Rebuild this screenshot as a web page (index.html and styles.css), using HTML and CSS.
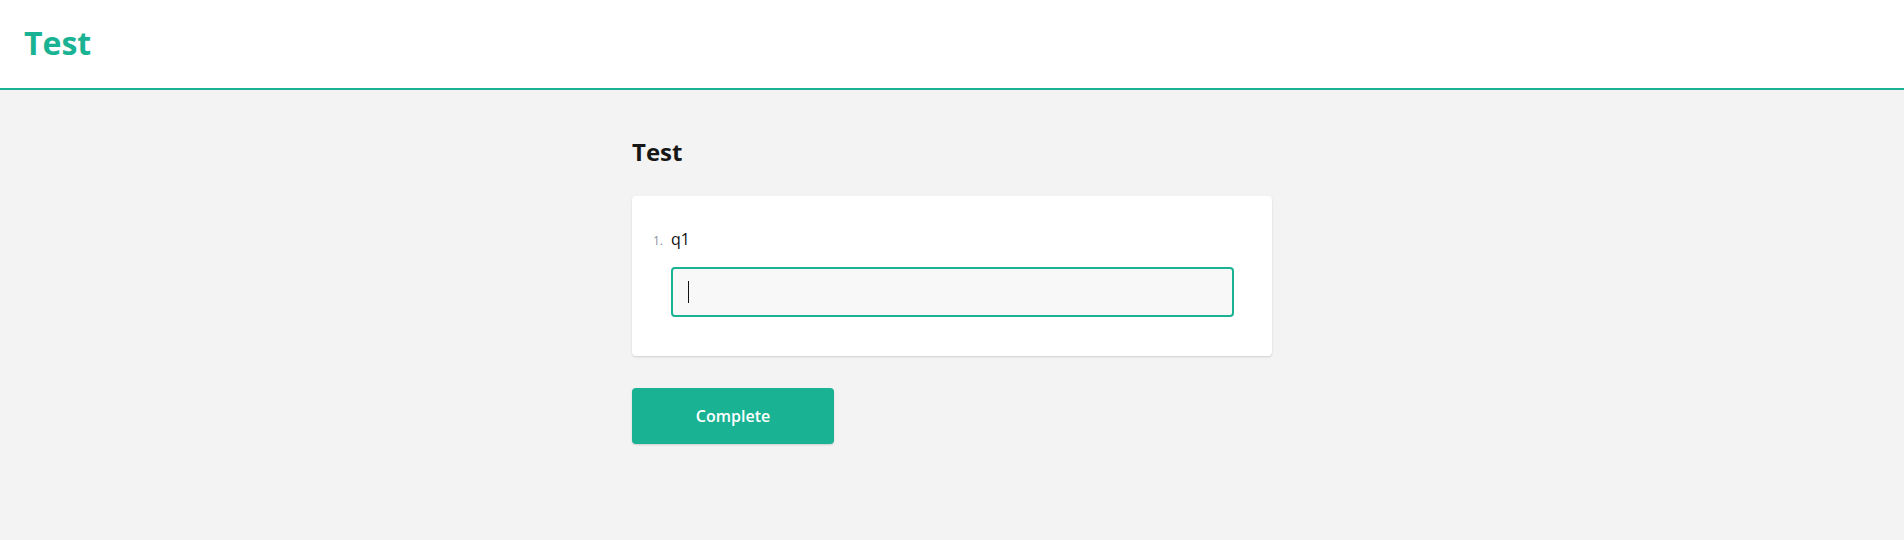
FILE: index.html
```html
<!DOCTYPE html>
<html lang="en">
<head>
<meta charset="utf-8">
<title>Test</title>
<link rel="stylesheet" href="styles.css">
</head>
<body>
<header class="topbar">
  <h1 class="brand">Test</h1>
</header>
<main class="survey">
  <h2 class="page-title">Test</h2>
  <section class="card">
    <div class="q-title">
      <span class="q-num">1.</span>
      <span class="q-text">q1</span>
    </div>
    <div class="q-input">
      <span class="caret"></span>
    </div>
  </section>
  <div class="nav">
    <button class="btn-complete" type="button">Complete</button>
  </div>
</main>
</body>
</html>
```
FILE: styles.css
```css
html, body {
  margin: 0;
  padding: 0;
}
body {
  background: #f3f3f3;
  font-family: "Open Sans", "Noto Sans", sans-serif;
  color: #161616;
  min-height: 540px;
}
.topbar {
  background: #ffffff;
  height: 90px;
  box-sizing: border-box;
  padding: 23px 24px 0 24px;
  border-bottom: 2px solid #19b394;
}
.brand {
  margin: 0;
  font-size: 32px;
  line-height: 40px;
  font-weight: 700;
  color: #19b394;
}
.survey {
  width: 640px;
  margin: 0 auto;
  padding-top: 46px;
}
.page-title {
  margin: 0 0 28px 0;
  font-size: 24px;
  line-height: 32px;
  font-weight: 700;
  color: #161616;
}
.card {
  background: #ffffff;
  border-radius: 4px;
  box-shadow: 0 1px 2px 0 rgba(0, 0, 0, 0.15);
  padding: 31px 38px 39px 39px;
}
.q-title {
  display: flex;
  align-items: baseline;
  margin-left: -18px;
  height: 24px;
  line-height: 24px;
}
.q-num {
  width: 18px;
  font-size: 12px;
  line-height: 16px;
  color: #8a91a0;
}
.q-text {
  font-size: 16px;
  color: #101010;
}
.q-input {
  margin-top: 16px;
  height: 50px;
  box-sizing: border-box;
  background: #f8f8f8;
  border: 2px solid #19b394;
  border-radius: 4px;
  padding-left: 15px;
  display: flex;
  align-items: center;
}
.caret {
  display: block;
  width: 1px;
  height: 22px;
  background: #111111;
}
.nav {
  margin-top: 32px;
  display: flex;
}
.btn-complete {
  width: 202px;
  height: 56px;
  border: none;
  border-radius: 4px;
  background: #19b394;
  color: #ffffff;
  font-family: "Open Sans", "Noto Sans", sans-serif;
  font-size: 16px;
  font-weight: 600;
  line-height: 24px;
  padding: 16px 0;
  box-shadow: 0 1px 2px 0 rgba(0, 0, 0, 0.15);
  cursor: pointer;
}
```
